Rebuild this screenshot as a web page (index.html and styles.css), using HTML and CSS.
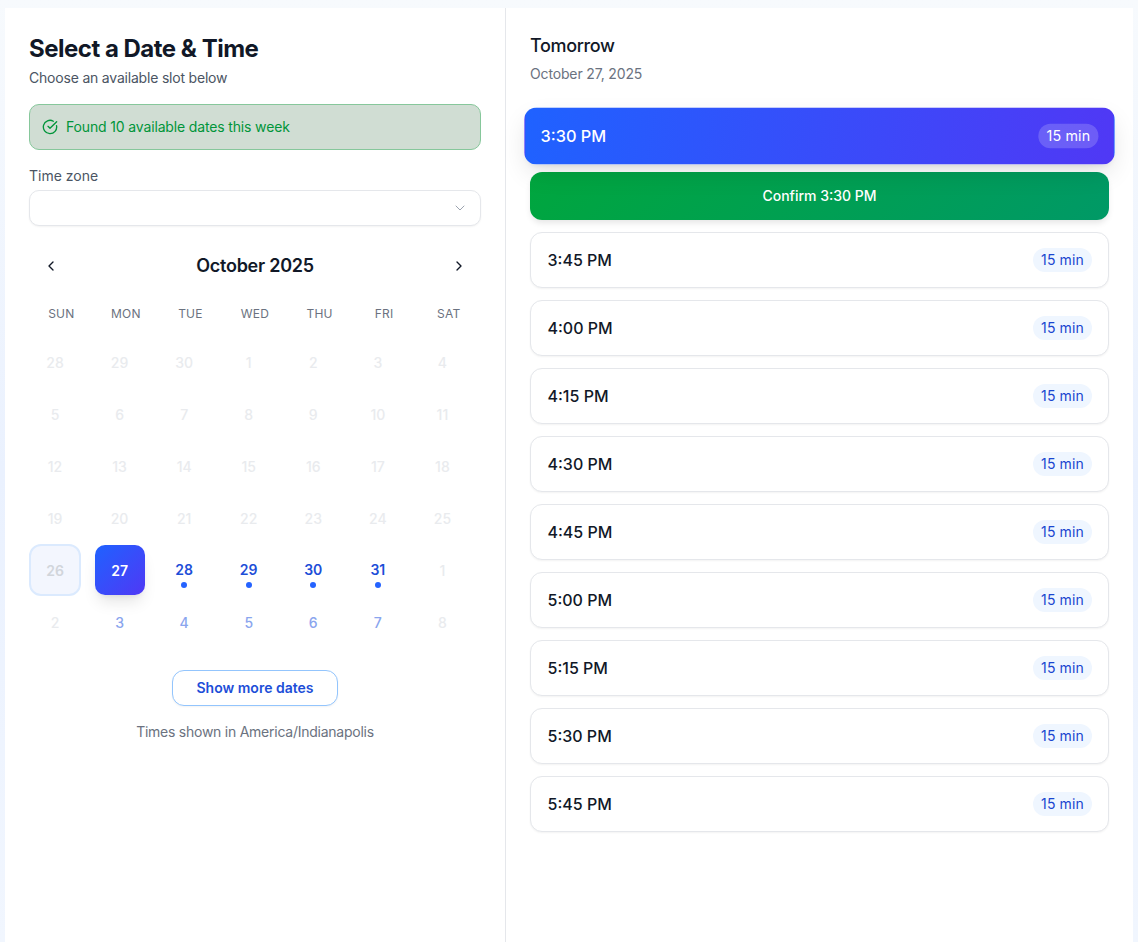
FILE: index.html
```html
<!DOCTYPE html>
<html>
<head>
    <title>Select a Date &amp; Time</title>
    <link rel="stylesheet" href="styles.css">
</head>
<body>
    <div class="card">
        <section class="left-panel">
            <h1>Select a Date &amp; Time</h1>
            <p class="subtitle">Choose an available slot below</p>

            <div class="alert">
                <svg class="alert-icon" viewBox="0 0 24 24"><path d="M21.801 10A10 10 0 1 1 17 3.335"/><path d="m9 11 3 3L22 4"/></svg>
                <span>Found 10 available dates this week</span>
            </div>

            <label class="field-label">Time zone</label>
            <div class="select">
                <svg class="select-icon" viewBox="0 0 24 24"><path d="m6 9 6 6 6-6"/></svg>
            </div>

            <div class="cal-header">
                <button class="nav-btn"><svg viewBox="0 0 24 24"><path d="m15 18-6-6 6-6"/></svg></button>
                <h2>October 2025</h2>
                <button class="nav-btn"><svg viewBox="0 0 24 24"><path d="m9 18 6-6-6-6"/></svg></button>
            </div>

            <div class="weekdays">
                <div>SUN</div><div>MON</div><div>TUE</div><div>WED</div><div>THU</div><div>FRI</div><div>SAT</div>
            </div>

            <div class="days">
                <div class="day">28</div><div class="day">29</div><div class="day">30</div><div class="day">1</div><div class="day">2</div><div class="day">3</div><div class="day">4</div>
                <div class="day">5</div><div class="day">6</div><div class="day">7</div><div class="day">8</div><div class="day">9</div><div class="day">10</div><div class="day">11</div>
                <div class="day">12</div><div class="day">13</div><div class="day">14</div><div class="day">15</div><div class="day">16</div><div class="day">17</div><div class="day">18</div>
                <div class="day">19</div><div class="day">20</div><div class="day">21</div><div class="day">22</div><div class="day">23</div><div class="day">24</div><div class="day">25</div>
                <div class="day today">26</div>
                <div class="day selected">27</div>
                <div class="day open">28</div>
                <div class="day open">29</div>
                <div class="day open">30</div>
                <div class="day open">31</div>
                <div class="day">1</div>
                <div class="day">2</div>
                <div class="day next">3</div>
                <div class="day next">4</div>
                <div class="day next">5</div>
                <div class="day next">6</div>
                <div class="day next">7</div>
                <div class="day">8</div>
            </div>

            <div class="more-row">
                <button class="more-btn">Show more dates</button>
            </div>
            <p class="tz-note">Times shown in America/Indianapolis</p>
        </section>

        <section class="right-panel">
            <h2 class="day-title">Tomorrow</h2>
            <p class="day-date">October 27, 2025</p>

            <div class="slots">
                <div class="slot active"><span>3:30 PM</span><span class="badge">15 min</span></div>
                <button class="confirm">Confirm 3:30 PM</button>
                <div class="slot"><span>3:45 PM</span><span class="badge">15 min</span></div>
                <div class="slot"><span>4:00 PM</span><span class="badge">15 min</span></div>
                <div class="slot"><span>4:15 PM</span><span class="badge">15 min</span></div>
                <div class="slot"><span>4:30 PM</span><span class="badge">15 min</span></div>
                <div class="slot"><span>4:45 PM</span><span class="badge">15 min</span></div>
                <div class="slot"><span>5:00 PM</span><span class="badge">15 min</span></div>
                <div class="slot"><span>5:15 PM</span><span class="badge">15 min</span></div>
                <div class="slot"><span>5:30 PM</span><span class="badge">15 min</span></div>
                <div class="slot"><span>5:45 PM</span><span class="badge">15 min</span></div>
            </div>
        </section>
    </div>
</body>
</html>
```

FILE: styles.css
```css
* { box-sizing: border-box; }
html, body { height: 100%; }
body { margin: 0; padding: 8px 5px 0 5px; overflow: hidden; font-family: Inter, "Liberation Sans", sans-serif; color: #111827; background: linear-gradient(180deg, #f7fafd 0%, #eaf1fe 50%, #f1f6fe 100%); }
h1, h2, p { margin: 0; }
svg { fill: none; stroke: currentColor; stroke-width: 2; stroke-linecap: round; stroke-linejoin: round; display: block; }

.card { display: flex; height: 100%; background: #fff; }
.left-panel { width: 501px; padding: 24px 24px 0; border-right: 1px solid #e5e7eb; }
.right-panel { flex: 1; padding: 24px 24px 0; }

h1 { margin-top: 1px; font-size: 24px; line-height: 32px; font-weight: 700; letter-spacing: -0.5px; }
.subtitle { margin-top: 3px; font-size: 14px; line-height: 20px; letter-spacing: -0.2px; color: #4b5563; }

.alert { display: flex; align-items: center; gap: 8px; height: 46px; margin-top: 16px; padding: 0 12px 1px; background: #d0ddd3; border: 1px solid #86c79b; border-radius: 10px; font-size: 14px; letter-spacing: -0.15px; color: #00953a; }
.alert-icon { width: 16px; height: 16px; flex: none; }

.field-label { display: block; margin-top: 16px; font-size: 14px; line-height: 20px; font-weight: 400; color: #4b5563; }
.select { display: flex; align-items: center; justify-content: flex-end; height: 36px; margin-top: 4px; padding: 0 12px; background: #fff; border: 1px solid #e5e7eb; border-radius: 10px; box-shadow: 0 1px 2px rgba(0, 0, 0, 0.05); color: #9ca3af; }
.select-icon { width: 16px; height: 16px; stroke-width: 1.5; }

.cal-header { display: flex; align-items: center; justify-content: space-between; height: 32px; margin-top: 24px; padding: 0 12px; }
.cal-header h2 { padding-bottom: 1px; font-size: 18px; font-weight: 600; letter-spacing: -0.25px; }
.nav-btn { width: 20px; height: 20px; padding: 2px; background: none; border: none; color: #111827; }

.weekdays { display: grid; grid-template-columns: repeat(7, 1fr); margin-top: 24px; font-size: 12px; line-height: 16px; font-weight: 400; text-align: center; letter-spacing: 0.2px; color: #6b7280; }

.days { display: grid; grid-template-columns: repeat(7, 1fr); grid-auto-rows: 52px; margin-top: 14px; }
.day { display: flex; align-items: center; justify-content: center; position: relative; width: 52px; height: 52px; font-size: 14px; font-weight: 500; color: #e9ebee; border-radius: 12px; }
.day.today { background: #f3f6fe; border: 2px solid #dbeafe; color: #d1d5db; font-weight: 600; }
.day.selected { width: 50px; height: 50px; margin: 1px; border-radius: 10px; background: linear-gradient(135deg, #1f62ff, #5038f5); color: #fff; font-weight: 600; box-shadow: 0 10px 15px -3px rgba(0, 0, 0, 0.1), 0 4px 6px -4px rgba(0, 0, 0, 0.1); }
.day.open { padding-bottom: 1px; color: #1d4ed8; font-weight: 600; }
.day.open::after { content: ""; position: absolute; left: 23px; bottom: 8px; width: 6px; height: 6px; border-radius: 50%; background: #2563ff; }
.day.next { color: #8aa5ee; }

.more-row { display: flex; justify-content: center; margin-top: 22px; }
.more-btn { height: 36px; width: 166px; padding-bottom: 2px; background: #fff; border: 1px solid #93c5fd; border-radius: 12px; box-shadow: 0 1px 2px rgba(0, 0, 0, 0.05); font-family: inherit; font-size: 14px; font-weight: 600; color: #1d4ed8; }
.tz-note { margin-top: 16px; font-size: 14px; line-height: 20px; letter-spacing: -0.25px; text-align: center; color: #6b7280; }

.day-title { font-size: 18px; line-height: 28px; font-weight: 500; letter-spacing: -0.35px; }
.day-date { margin-top: 4px; font-size: 14px; line-height: 20px; letter-spacing: -0.15px; color: #6b7280; }

.slots { display: flex; flex-direction: column; gap: 12px; margin-top: 24px; }
.slot { display: flex; align-items: center; justify-content: space-between; height: 56px; padding: 0 16px 0 16.5px; background: #fff; border: 1px solid #e5e7eb; border-radius: 12px; box-shadow: 0 1px 2px rgba(0, 0, 0, 0.05); font-size: 16px; font-weight: 500; }
.badge { padding: 4px 8px; border-radius: 999px; background: #eff6ff; font-size: 14px; line-height: 16px; font-weight: 400; letter-spacing: 0.15px; color: #1a46d0; }
.slot.active { padding: 0 15px; transform: scale(1.02); background: linear-gradient(100deg, #1f62ff, #5038f5); border-color: transparent; color: #fff; box-shadow: 0 10px 25px -3px rgba(0, 0, 0, 0.12), 0 4px 6px -4px rgba(0, 0, 0, 0.1); }
.slot.active .badge { background: rgba(255, 255, 255, 0.18); color: #fff; }
.confirm { height: 48px; margin-top: -4px; padding-bottom: 2px; background: linear-gradient(135deg, #00a63e, #009966); border: none; border-radius: 12px; box-shadow: 0 4px 6px -1px rgba(0, 0, 0, 0.1); font-family: inherit; font-size: 14px; font-weight: 500; color: #fff; }
```
